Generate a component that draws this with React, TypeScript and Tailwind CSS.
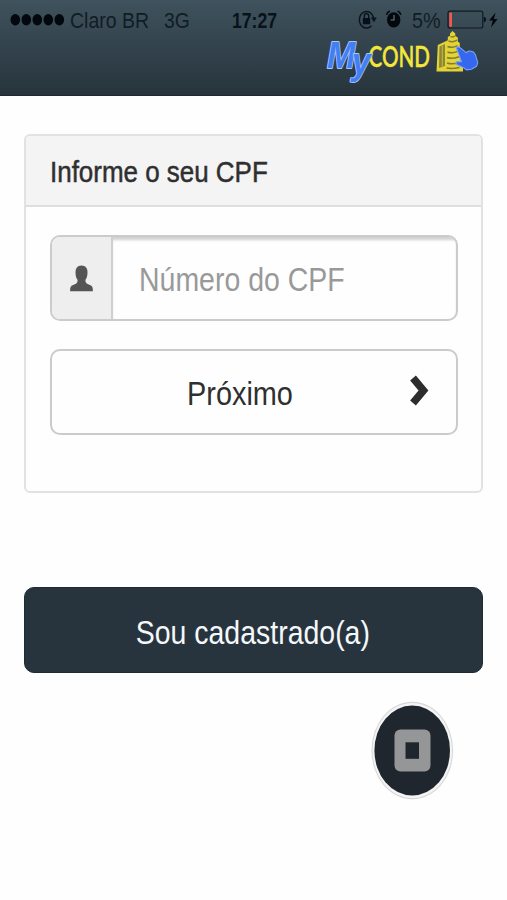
const font = 'font-["Liberation_Sans",Arial,sans-serif]';

function SignalDots() {
  return (
    <svg className="ml-2.5 h-10 w-[55px] shrink-0" viewBox="0 0 55 40" fill="#02080e">
      {[5.3, 16.3, 27.3, 38.3, 49.3].map((cx) => (
        <ellipse key={cx} cx={cx} cy="19.8" rx="4.8" ry="5.7" />
      ))}
    </svg>
  );
}

// rotation lock + alarm
function StatusIcons() {
  return (
    <svg className="ml-auto h-10 w-[50px] shrink-0" viewBox="355 0 50 40">
      <path d="M371.5 25.8A7.2 8.3 0 1 1 373.6 18" fill="none" stroke="#0b151c" strokeWidth="1.5" />
      <path d="M370.8 17.6h6l-2.8 4.6z" fill="#0b151c" />
      <rect x="362.8" y="18" width="7.4" height="6.2" rx="0.8" fill="#06101a" />
      <path d="M364.3 18.5v-2.2a2.2 2.6 0 0 1 4.4 0v2.2" fill="none" stroke="#06101a" strokeWidth="1.3" />
      <ellipse cx="393.7" cy="19.8" rx="6.7" ry="7.6" fill="#02080e" />
      <path d="M386.6 14.8q.6-2.8 3.2-3.8M400.8 14.8q-.6-2.8-3.2-3.8" fill="none" stroke="#02080e" strokeWidth="1.6" />
      <path d="M394 15v5h-3.4" fill="none" stroke="#6d7c84" strokeWidth="1.1" />
    </svg>
  );
}

function Battery() {
  return (
    <svg className="h-10 w-[61px] shrink-0" viewBox="446 0 61 40">
      <rect x="448" y="11.2" width="34.8" height="16.8" rx="2" fill="none" stroke="#101b23" strokeWidth="1.2" />
      <rect x="449.2" y="12.6" width="2.8" height="14.2" fill="#ee5a50" />
      <path d="M483.9 16.8q2.2.6 2.2 2.8t-2.2 2.8z" fill="#07111a" />
      <path d="M495.6 12.4l-6.6 8.2h3.7l-1.6 7 6.5-8.6h-3.7z" fill="#02080e" />
    </svg>
  );
}

function Logo() {
  return (
    <svg className="-mt-3 ml-[320px] h-[62px] w-[170px]" viewBox="0 0 170 62">
      <text
        className="font-[Lato,sans-serif]"
        x="48.5"
        y="39.3"
        fontSize="28.5"
        fontWeight="600"
        fill="#f4e63a"
        stroke="#f4e63a"
        strokeWidth="0.3"
        textLength="61.5"
        lengthAdjust="spacingAndGlyphs"
      >
        COND
      </text>
      <text
        className='font-["Liberation_Sans",Arial,sans-serif] italic [paint-order:stroke]'
        transform="translate(7 40) scale(.92 1)"
        x="0 27"
        y="0 6"
        fontSize="37"
        fontWeight="700"
        fill="#447ef4"
        stroke="#a9c8fa"
        strokeWidth="1.8"
        strokeLinejoin="round"
      >
        My
      </text>
      {/* building */}
      <path d="M116.500 43.500l1.300-26.500 8-3.800 2-1V9l2.200-1.200V5.500l2.500-2.500 2.800 2.500v2.600l2.500 1.400v4l2 1.500v15l3.200 8.500v5z" fill="#e3d337" />
      <path d="M119.500 18.500l5.500-2.600V38l-6 2z" fill="#8b8738" />
      <path d="M122.300 17.500v21" stroke="#c6bd36" strokeWidth="1" />
      <path
        d="M130.500 8.500q2.500 1 4.500-.5M128.500 13q4.500 1.800 8.500-.8M127.500 18.500q5 2 10-.8M127.500 24q5 2 10.500-.8M127 29.500q5 2 12-.8M127 35q6 2 12-.8M126.500 40q6 1 13-.6"
        fill="none"
        stroke="#827d30"
        strokeWidth="1.500"
      />
      {/* pointing hand */}
      <path
        d="M136.300 19.700q1.800-1.800 3.800 0l6 5 2.400-1.700 2.600.3 2.400.8 1.900 2.600 2.400 7.900-1.200 3.600-5 3-5.200.7-2.800-2.200-7-3.300q-1.500-1.700.5-2.900l4.400.2z"
        fill="#3568ee"
        stroke="#78a2f3"
        strokeWidth="1.100"
        strokeLinejoin="round"
      />
    </svg>
  );
}

export default function App() {
  return (
    <main className={`${font} flex h-[900px] w-[507px] flex-col overflow-hidden bg-[#fefefe] text-[#2f2f2f]`}>
      {/* status bar + logo */}
      <header className="h-24 shrink-0 border-b border-[#20292f] bg-linear-to-b from-[#3f525d] to-[#27343c]">
        <div className="flex h-10 items-center text-[22px] whitespace-nowrap text-[#111c24]">
          <SignalDots />
          <span className="ml-[5px] w-[94px] origin-left scale-x-[0.885]">Claro BR</span>
          <span className="w-[68px] origin-left scale-x-[0.88]">3G</span>
          <span className="w-[50px] origin-left scale-x-[0.8] font-bold text-[#08121a]">17:27</span>
          <StatusIcons />
          <span className="ml-[7px] w-[34px] origin-left scale-x-[0.9]">5%</span>
          <Battery />
        </div>
        <Logo />
      </header>

      {/* CPF panel */}
      <section className="mx-6 mt-[38px] h-[359px] shrink-0 rounded-md border-2 border-[#e2e2e2]">
        <h1 className="flex h-[71px] items-center rounded-t-sm border-b-2 border-[#dedede] bg-[#f4f4f4] pl-6 text-[30px] whitespace-nowrap">
          <span className="mt-0.5 origin-left scale-x-[0.865] [-webkit-text-stroke:0.5px_#2f2f2f]">Informe o seu CPF</span>
        </h1>

        <div className="flex flex-col gap-7 pt-7 pr-[23px] pl-6">
          <div className="flex h-[86px] overflow-hidden rounded-[10px] border-2 border-[#cbcbcb]">
            <div className="flex w-[61px] shrink-0 items-center justify-center border-r-2 border-[#cfcfcf] bg-[#eeeeee]">
              <svg className="h-[27px] w-[23px]" viewBox="0 0 23 27" fill="#555">
                <path d="M11.500.5c4 0 6 2.800 6 6.700 0 3.400-.7 5.900-2 7.600-.3 2 .3 3.300 2.100 4.100l3.400 1.700c1.300.7 1.900 2 1.900 5.700H.1c0-3.700.6-5 1.900-5.700l3.400-1.700c1.800-.8 2.400-2.100 2.100-4.100-1.300-1.700-2-4.200-2-7.600C5.500 3.300 7.500.5 11.500.5z" />
              </svg>
            </div>
            <div className="flex flex-1 items-center pl-[26px] text-[33.5px] whitespace-nowrap text-[#999] shadow-[inset_0_4px_3px_-1px_#d0d0d0]">
              <span className="mt-1 origin-left scale-x-[0.85]">Número do CPF</span>
            </div>
          </div>

          <button className="flex h-[86px] items-center rounded-[10px] border-2 border-[#cbcbcb] text-[33.5px] whitespace-nowrap">
            <span className="mt-1 ml-[135px] w-[123px] origin-left scale-x-[0.862] text-left">Próximo</span>
            <svg className="mr-[27px] mb-1 ml-auto h-[31px] w-[19px]" viewBox="0 0 19 31">
              <path d="M3 3l10.500 12.500L3 28" fill="none" stroke="#2d2d2d" strokeWidth="7.500" />
            </svg>
          </button>
        </div>
      </section>

      <button className="mx-6 mt-[94px] flex h-[86px] shrink-0 items-center justify-center rounded-[10px] border border-[#202b33] bg-[#28343d] text-[33.5px] whitespace-nowrap text-[#f4f8fb]">
        <span className="mt-1.5 -ml-0.5 scale-x-[0.85]">Sou cadastrado(a)</span>
      </button>

      {/* floating record/stop button */}
      <svg className="mt-[27px] ml-[370px] h-[102px] w-[86px] shrink-0" viewBox="370 700 86 102">
        <ellipse cx="412.300" cy="750.500" rx="40.800" ry="48.800" fill="#d5d6d7" />
        <ellipse cx="412.300" cy="750.500" rx="39.800" ry="47.600" fill="#f4f4f4" />
        <ellipse cx="412.200" cy="750.500" rx="37.800" ry="45" fill="#20262d" />
        <rect x="394.500" y="729.500" width="36" height="42" rx="6" fill="#949698" />
        <rect x="405.500" y="742.300" width="13.500" height="16.500" fill="#20262d" />
      </svg>
    </main>
  );
}
